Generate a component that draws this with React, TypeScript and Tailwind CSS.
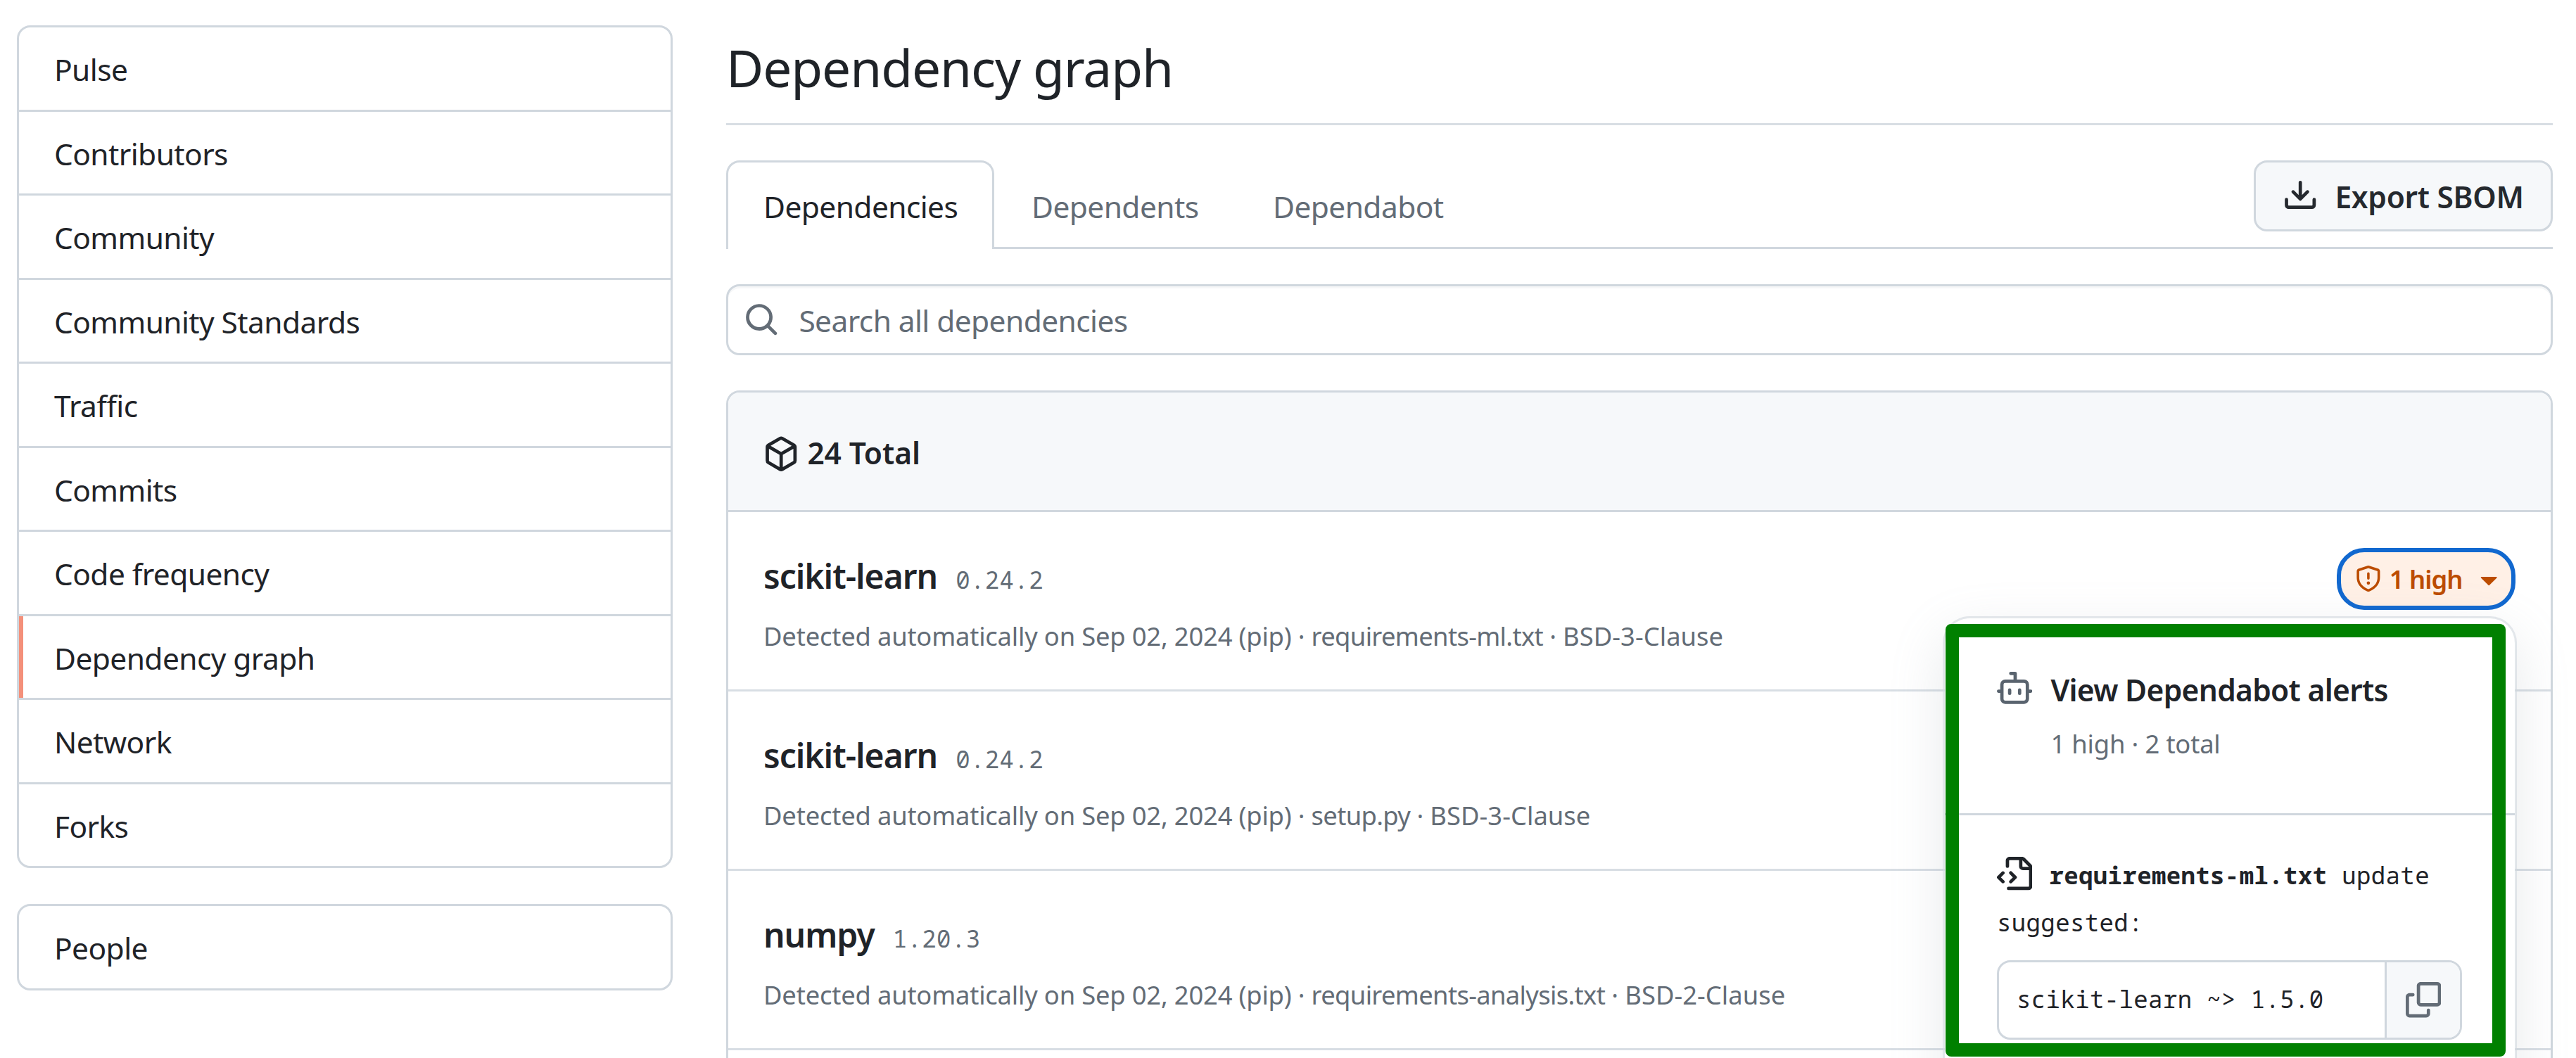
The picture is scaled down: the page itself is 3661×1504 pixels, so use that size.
import React from "react";

const PATHS = {
  search: [
    "M10.68 11.74a6 6 0 0 1-7.922-8.982 6 6 0 0 1 8.982 7.922l3.04 3.04a.749.749 0 0 1-.326 1.275.749.749 0 0 1-.734-.215ZM11.5 7a4.499 4.499 0 1 0-8.997 0A4.499 4.499 0 0 0 11.5 7Z",
  ],
  download: [
    "M2.75 14A1.75 1.75 0 0 1 1 12.25v-2.5a.75.75 0 0 1 1.5 0v2.5c0 .138.112.25.25.25h10.5a.25.25 0 0 0 .25-.25v-2.5a.75.75 0 0 1 1.5 0v2.5A1.75 1.75 0 0 1 13.25 14Z",
    "M7.25 7.689V2a.75.75 0 0 1 1.5 0v5.689l1.97-1.969a.749.749 0 1 1 1.06 1.06l-3.25 3.25a.749.749 0 0 1-1.06 0L4.22 6.78a.749.749 0 1 1 1.06-1.06l1.97 1.969Z",
  ],
  cube: [
    "m8.878.392 5.25 3.045c.54.314.872.89.872 1.514v6.098a1.75 1.75 0 0 1-.872 1.514l-5.25 3.045a1.75 1.75 0 0 1-1.756 0l-5.25-3.045A1.75 1.75 0 0 1 1 11.049V4.951c0-.624.332-1.201.872-1.514L7.122.392a1.75 1.75 0 0 1 1.756 0ZM7.875 1.69l-4.63 2.685L8 7.133l4.755-2.758-4.63-2.685a.248.248 0 0 0-.25 0ZM2.5 5.677v5.372c0 .09.047.171.125.216l4.625 2.683V8.432Zm6.25 8.271 4.625-2.683a.25.25 0 0 0 .125-.216V5.677L8.75 8.432Z",
  ],
  copy: [
    "M0 6.75C0 5.784.784 5 1.75 5h1.5a.75.75 0 0 1 0 1.5h-1.5a.25.25 0 0 0-.25.25v7.5c0 .138.112.25.25.25h7.5a.25.25 0 0 0 .25-.25v-1.5a.75.75 0 0 1 1.5 0v1.5A1.75 1.75 0 0 1 9.25 16h-7.5A1.75 1.75 0 0 1 0 14.25Z",
    "M5 1.75C5 .784 5.784 0 6.75 0h7.5C15.216 0 16 .784 16 1.75v7.5A1.75 1.75 0 0 1 14.25 11h-7.5A1.75 1.75 0 0 1 5 9.25Zm1.75-.25a.25.25 0 0 0-.25.25v7.5c0 .138.112.25.25.25h7.5a.25.25 0 0 0 .25-.25v-7.5a.25.25 0 0 0-.25-.25Z",
  ],
  robot: [
    "M5.75 7.5a.75.75 0 0 1 .75.75v1.5a.75.75 0 0 1-1.5 0v-1.5a.75.75 0 0 1 .75-.75Zm5.25.75a.75.75 0 0 0-1.5 0v1.5a.75.75 0 0 0 1.5 0v-1.5Z",
    "M6.25 0h2A.75.75 0 0 1 9 .75V3.5h3.25a2.25 2.25 0 0 1 2.25 2.25V8h.75a.75.75 0 0 1 0 1.5h-.75v2.75a2.25 2.25 0 0 1-2.25 2.25h-8.5a2.25 2.25 0 0 1-2.25-2.25V9.5H.75a.75.75 0 0 1 0-1.5h.75V5.75A2.25 2.25 0 0 1 3.75 3.5H7.5v-2H6.25a.75.75 0 0 1 0-1.5ZM3 5.75v6.5c0 .414.336.75.75.75h8.5a.75.75 0 0 0 .75-.75v-6.5a.75.75 0 0 0-.75-.75h-8.5a.75.75 0 0 0-.75.75Z",
  ],
  fileCode: [
    "M4 1.75C4 .784 4.784 0 5.75 0h5.586c.464 0 .909.184 1.237.513l2.914 2.914c.329.328.513.773.513 1.237v8.586A1.75 1.75 0 0 1 14.25 15h-9a.75.75 0 0 1 0-1.5h9a.25.25 0 0 0 .25-.25V6h-2.75A1.75 1.75 0 0 1 10 4.25V1.5H5.75a.25.25 0 0 0-.25.25v2.5a.75.75 0 0 1-1.5 0Zm1.72 4.97a.75.75 0 0 1 1.06 0l2 2a.75.75 0 0 1 0 1.06l-2 2a.749.749 0 0 1-1.275-.326.749.749 0 0 1 .215-.734l1.47-1.47-1.47-1.47a.75.75 0 0 1 0-1.06ZM3.28 7.78 1.81 9.25l1.47 1.47a.751.751 0 0 1-.018 1.042.751.751 0 0 1-1.042.018l-2-2a.75.75 0 0 1 0-1.06l2-2a.751.751 0 0 1 1.042.018.751.751 0 0 1 .018 1.042Zm8.22-6.218V4.25c0 .138.112.25.25.25h2.688l-.011-.013-2.914-2.914-.013-.011Z",
  ],
  shield: [
    "M7.467.133a1.748 1.748 0 0 1 1.066 0l5.25 1.68A1.75 1.75 0 0 1 15 3.48V7c0 1.566-.32 3.182-1.303 4.682-.983 1.498-2.585 2.813-5.032 3.855a1.697 1.697 0 0 1-1.33 0c-2.447-1.042-4.049-2.357-5.032-3.855C1.32 10.182 1 8.566 1 7V3.48a1.75 1.75 0 0 1 1.217-1.667Zm.61 1.429a.25.25 0 0 0-.153 0l-5.25 1.68a.25.25 0 0 0-.174.238V7c0 1.358.275 2.666 1.057 3.86.784 1.194 2.121 2.34 4.366 3.297a.196.196 0 0 0 .154 0c2.245-.956 3.582-2.104 4.366-3.298C13.225 9.666 13.5 8.36 13.5 7V3.48a.251.251 0 0 0-.174-.237l-5.25-1.68ZM8.75 4.75v3a.75.75 0 0 1-1.5 0v-3a.75.75 0 0 1 1.5 0ZM9 10.5a1 1 0 1 1-2 0 1 1 0 0 1 2 0Z",
  ],
  caret: [
    "m4.427 7.427 3.396 3.396a.25.25 0 0 0 .354 0l3.396-3.396A.25.25 0 0 0 11.396 7H4.604a.25.25 0 0 0-.177.427Z",
  ],
};

function Icon({ name, className = "size-[50.4px]" }: { name: keyof typeof PATHS; className?: string }) {
  return (
    <svg viewBox="0 0 16 16" fill="currentColor" aria-hidden="true" className={`shrink-0 ${className}`}>
      {PATHS[name].map((d) => (
        <path key={d} d={d} />
      ))}
    </svg>
  );
}

const NAV = [
  "Pulse",
  "Contributors",
  "Community",
  "Community Standards",
  "Traffic",
  "Commits",
  "Code frequency",
  "Dependency graph",
  "Network",
  "Forks",
];

const PACKAGES = [
  { name: "scikit-learn", version: "0.24.2", file: "requirements-ml.txt", license: "BSD-3-Clause", alert: true },
  { name: "scikit-learn", version: "0.24.2", file: "setup.py", license: "BSD-3-Clause" },
  { name: "numpy", version: "1.20.3", file: "requirements-analysis.txt", license: "BSD-2-Clause" },
];

function NavItem({ label, active }: { label: string; active?: boolean }) {
  return (
    <li>
      <a
        className={
          active
            ? "flex h-[116.5px] items-center border-l-[6px] border-[#f4907a] pt-1 pl-[44px]"
            : "flex h-[116.5px] items-center pt-1 pl-[50px]"
        }
      >
        {label}
      </a>
    </li>
  );
}

function Sidebar() {
  return (
    <nav className="mt-9 flex w-[932px] shrink-0 flex-col gap-[51px]">
      <ul className="divide-y-[3px] divide-[#d0d7de] rounded-[19px] border-[3px] border-[#d0d7de]">
        {NAV.map((label) => (
          <NavItem key={label} label={label} active={label === "Dependency graph"} />
        ))}
      </ul>
      <ul className="rounded-[19px] border-[3px] border-[#d0d7de]">
        <NavItem label="People" />
      </ul>
    </nav>
  );
}

function AlertPopover() {
  return (
    <div className="absolute top-[97px] -right-[2px] z-10 h-[684px] w-[816px] rounded-[38px] border-[3px] border-[#d0d7de]/60 bg-white bg-clip-padding text-[#1f2328] shadow-[0_25px_76px_rgba(140,149,159,0.2)]">
      <div className="flex h-[280px] gap-[26px] border-b-[3px] border-[#d0d7de] pt-[69px] pl-[74px]">
        <Icon name="robot" className="mt-[7px] size-[50.4px] text-[#59636e]" />
        <div className="flex flex-col gap-4">
          <div className="text-[42.5px] leading-[66px] font-[560] tracking-[-0.7px]">View Dependabot alerts</div>
          <div className="text-[36.4px] leading-[54px] tracking-[-0.18px] text-[#636c76]">1 high · 2 total</div>
        </div>
      </div>
      <div className="px-[74px] pt-[52px] font-['Noto_Sans_Mono','DejaVu_Sans_Mono',monospace] text-[34px] leading-[67px] tracking-[0.39px]">
        <div className="flex gap-6 whitespace-pre">
          <Icon name="fileCode" className="mt-[7px] size-[50.4px]" />
          <p>
            <strong className="font-bold">requirements-ml.txt</strong> update
          </p>
        </div>
        <p>suggested:</p>
        <div className="mt-5 flex h-[113px] w-[661px] overflow-hidden rounded-[19px] border-[3px] border-[#d0d7de]">
          <div className="flex flex-1 items-center pb-0.5 pl-[25px] whitespace-pre">scikit-learn ~&gt; 1.5.0</div>
          <button className="flex w-[107px] items-center justify-center border-l-[3px] border-[#d0d7de] bg-[#f6f8fa] text-[#636c76]">
            <Icon name="copy" />
          </button>
        </div>
      </div>
      <div className="absolute top-2 left-px h-[615px] w-[796px] rounded-lg border-[19px] border-[#008000]" />
    </div>
  );
}

function SeverityBadge() {
  return (
    <div className="relative -mt-px h-[88px] w-[254px] shrink-0">
      <button className="flex size-full items-center rounded-[39px] border-[6px] border-[#1168cf] bg-[#fff0e6] pr-[7px] pl-5 text-[#bc4c00]">
        <Icon name="shield" className="size-[37.8px]" />
        <span className="ml-[11px] text-[36.4px] leading-[54px] font-[560] tracking-[-1px]">1 high</span>
        <Icon name="caret" className="ml-auto size-[50.4px]" />
      </button>
      <AlertPopover />
    </div>
  );
}

function PackageRow({ name, version, file, license, alert }: (typeof PACKAGES)[number]) {
  return (
    <li className="flex h-[255px] items-start justify-between border-b-[3px] border-[#d8dee4] px-[50px] pt-[52px]">
      <div>
        <div className="flex h-[78px] items-baseline gap-[26px] pt-px leading-[76px]">
          <h3 className="text-[48px] font-[560] tracking-[-1px]">{name}</h3>
          <span className="font-['Noto_Sans_Mono','DejaVu_Sans_Mono',monospace] text-[34px] tracking-[0.39px] text-[#636c76]">
            {version}
          </span>
        </div>
        <p className="mt-[19px] text-[36.4px] leading-[54px] tracking-[-0.2px] whitespace-nowrap text-[#636c76]">
          Detected automatically on Sep 02, 2024 (pip) · <span className="tracking-[-0.66px]">{file}</span> ·{" "}
          <span className="tracking-[0.03px]">{license}</span>
        </p>
      </div>
      {alert && <SeverityBadge />}
    </li>
  );
}

export default function App() {
  return (
    <div className="flex h-[1504px] w-full gap-[76px] overflow-hidden bg-white pl-6 font-['Noto_Sans',sans-serif] text-[42.5px] leading-[60px] tracking-[-0.6px] text-[#1f2328]">
      <Sidebar />
      <main className="flex w-[2596px] shrink-0 flex-col">
        <h1 className="h-[178px] shrink-0 border-b-[3px] border-[#d8dee4] pt-[45px] text-[73px] leading-[102px] tracking-[-1.1px]">
          Dependency graph
        </h1>

        <div className="mt-[50px] flex h-[126px] shrink-0 items-start border-b-[3px] border-[#d0d7de] whitespace-nowrap text-[#636c76]">
          <a className="flex h-[126px] w-[381px] items-center rounded-t-[19px] border-x-[3px] border-t-[3px] border-[#d0d7de] bg-white pt-0.5 pl-[50px] text-[#1f2328]">
            Dependencies
          </a>
          <a className="ml-[53px] flex h-[126px] w-[343px] items-center pt-[5px]">Dependents</a>
          <a className="flex h-[126px] items-center pt-[5px]">Dependabot</a>
          <button className="ml-auto flex h-[101px] w-[425px] items-center rounded-[19px] border-[3px] border-[#d0d7de] bg-[#f6f8fa] pl-[38px] text-[#25292e]">
            <Icon name="download" />
            <span className="ml-6 pt-0.5 font-[560] tracking-[-0.29px]">Export SBOM</span>
          </button>
        </div>

        <div className="mt-[50px] flex h-[101px] shrink-0 items-center rounded-[19px] border-[3px] border-[#d0d7de] pl-[22px] text-[#636c76] shadow-[inset_0_3px_0_rgba(208,215,222,0.2)]">
          <Icon name="search" />
          <span className="ml-7 pt-[3px]">Search all dependencies</span>
        </div>

        <section className="mt-[50px] shrink-0 rounded-t-[19px] border-x-[3px] border-t-[3px] border-[#d0d7de]">
          <h2 className="flex h-[170px] items-center rounded-t-[16px] border-b-[3px] border-[#d0d7de] bg-[#f6f8fa] pl-[50px] font-[560] tracking-[-0.1px]">
            <Icon name="cube" className="mt-[7px] size-[50.4px]" />
            <span className="ml-3 pt-1">24 Total</span>
          </h2>
          <ul>
            {PACKAGES.map((pkg, i) => (
              <PackageRow key={i} {...pkg} />
            ))}
          </ul>
          <div className="h-10" />
        </section>
      </main>
    </div>
  );
}
